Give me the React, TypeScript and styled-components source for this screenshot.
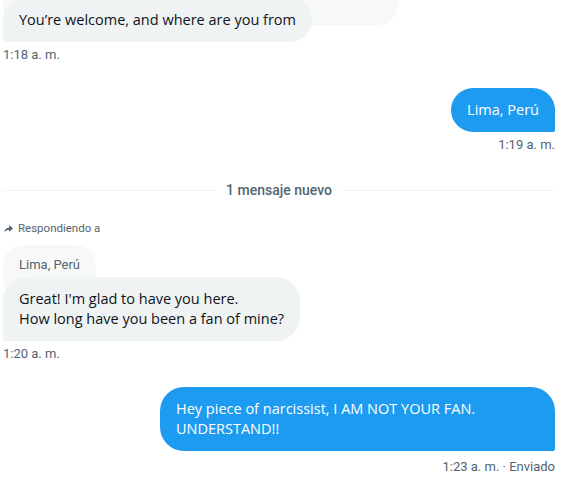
import React from "react";
import styled, { createGlobalStyle } from "styled-components";

const Global = createGlobalStyle`
  html, body { margin: 0; padding: 0; background: #ffffff; overflow: hidden; }
  body { font-family: "Open Sans", "Liberation Sans", sans-serif; }
`;

const Page = styled.div`
  display: flex;
  flex-direction: column;
  padding: 0 14px 0 3px;
  width: 569px;
  height: 489px;
  box-sizing: border-box;
  overflow: hidden;
`;

const Group = styled.div<{ $mt: number; $align: "start" | "end" }>`
  display: flex;
  flex-direction: column;
  align-items: ${p => (p.$align === "end" ? "flex-end" : "flex-start")};
  margin-top: ${p => p.$mt}px;
`;

const Quote = styled.div`
  max-width: 395px;
  box-sizing: border-box;
  padding: 12px 16px 24px;
  background: #f7f9f9;
  border-radius: 20px;
  font-family: Roboto, sans-serif;
  font-size: 13px;
  line-height: 16px;
  color: #536471;
`;

/* the quoted bubble of the first message, scrolled mostly out of view */
const QuoteTail = styled(Quote)<{ $h: number }>`
  width: 395px;
  height: ${p => p.$h}px;
  padding: 0;
`;

const Bubble = styled.div<{ $sent?: boolean; $overlap?: number }>`
  position: relative;
  max-width: 395px;
  box-sizing: border-box;
  padding: 12px 16px;
  margin-top: ${p => (p.$overlap ? -p.$overlap : 0)}px;
  border-radius: ${p => (p.$sent ? "24px 24px 2px 24px" : "24px 24px 24px 2px")};
  background: ${p => (p.$sent ? "#1d9bf0" : "#eff3f4")};
  color: ${p => (p.$sent ? "#ffffff" : "#0f1419")};
  font-family: "Open Sans", sans-serif;
  font-size: 14.5px;
  line-height: 20px;
  white-space: pre-line;
`;

const Meta = styled.div<{ $mt?: number }>`
  margin-top: ${p => p.$mt ?? 5}px;
  font-family: Roboto, sans-serif;
  font-size: 13px;
  line-height: 16px;
  color: #536471;
`;

const Divider = styled.div`
  display: flex;
  align-items: center;
  gap: 11px;
  margin-top: 27px;
  font-family: Roboto, sans-serif;
  font-size: 14px;
  font-weight: 500;
  line-height: 20px;
  color: #536471;
  &::before, &::after {
    content: "";
    flex: 1;
    height: 1px;
    background: #eff3f4;
  }
`;

const ReplyLabel = styled.div`
  display: flex;
  align-items: center;
  gap: 5px;
  margin-top: 20px;
  margin-bottom: 9px;
  padding-left: 1px;
  font-family: Roboto, sans-serif;
  font-size: 11.5px;
  line-height: 16px;
  color: #536471;
`;

function ReplyIcon() {
  return (
    <svg width="9" height="9" viewBox="0 0 12 12" aria-hidden="true">
      <path
        d="M7 1.2 L12 6 L7 10.8 V8 C4.2 8 2 8.8 0.3 11.2 C0.8 7.2 3 5 7 4.5 Z"
        fill="#536471"
      />
    </svg>
  );
}

export default function App() {
  return (
    <Page>
      <Global />
      <Group $mt={-20} $align="start">
        <QuoteTail $h={45} />
        <Bubble $overlap={27}>You’re welcome, and where are you from</Bubble>
        <Meta>1:18 a. m.</Meta>
      </Group>

      <Group $mt={25} $align="end">
        <Bubble $sent>Lima, Perú</Bubble>
        <Meta>1:19 a. m.</Meta>
      </Group>

      <Divider>1 mensaje nuevo</Divider>

      <Group $mt={0} $align="start">
        <ReplyLabel>
          <ReplyIcon />
          Respondiendo a
        </ReplyLabel>
        <Quote>Lima, Perú</Quote>
        <Bubble $overlap={20}>{"Great! I'm glad to have you here.\nHow long have you been a fan of mine?"}</Bubble>
        <Meta>1:20 a. m.</Meta>
      </Group>

      <Group $mt={25} $align="end">
        <Bubble $sent>Hey piece of narcissist, I AM NOT YOUR FAN. UNDERSTAND!!</Bubble>
        <Meta $mt={8}>1:23 a. m. · Enviado</Meta>
      </Group>
    </Page>
  );
}
